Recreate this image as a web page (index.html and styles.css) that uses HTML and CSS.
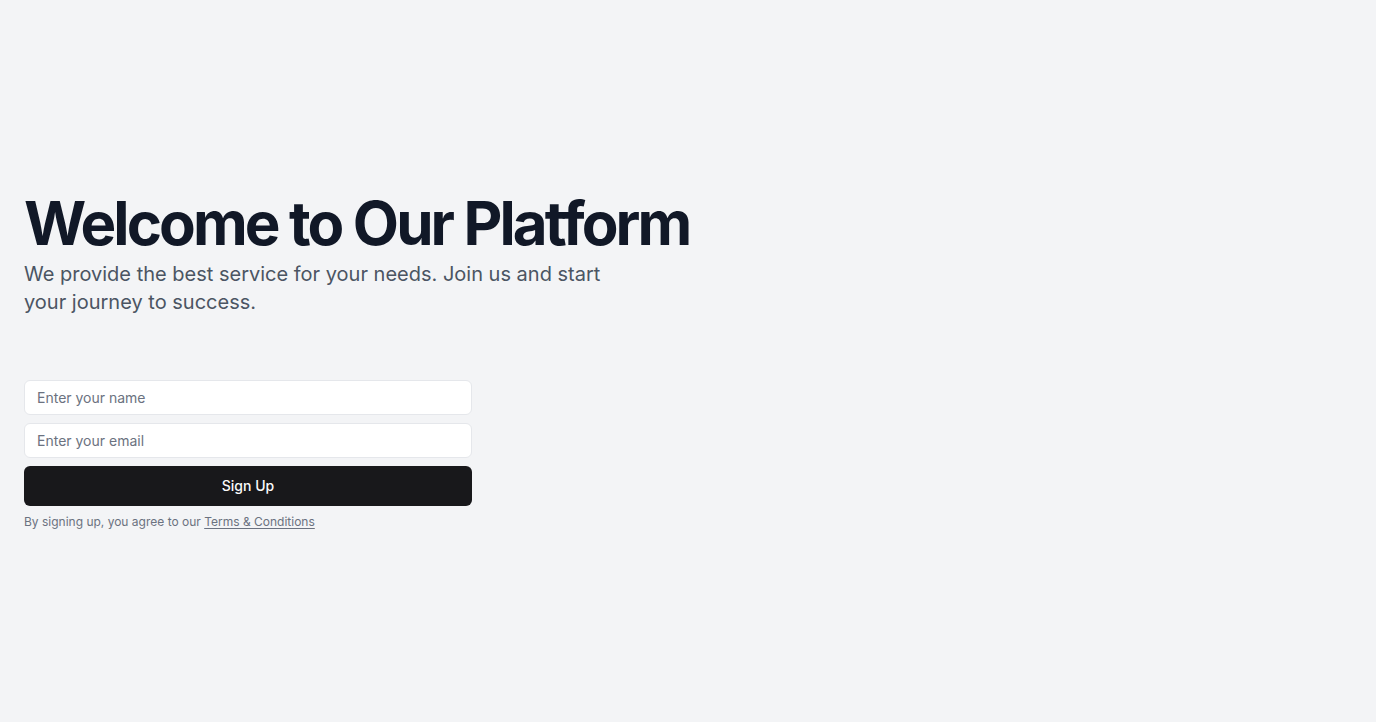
FILE: index.html
```html
<!DOCTYPE html>
<html lang="en">
<head>
<meta charset="utf-8">
<title>Welcome</title>
<link rel="stylesheet" href="styles.css">
</head>
<body>
<section class="hero">
  <div class="content">
    <div class="intro">
      <h1 class="title">Welcome to Our Platform</h1>
      <p class="lead">We provide the best service for your needs. Join us and start your journey to success.</p>
    </div>
    <form class="signup">
      <input class="field" type="text" placeholder="Enter your name">
      <input class="field" type="email" placeholder="Enter your email">
      <button class="submit" type="button">Sign Up</button>
      <p class="note">By signing up, you agree to our <a class="terms" href="#">Terms &amp; Conditions</a></p>
    </form>
  </div>
</section>
</body>
</html>
```

FILE: styles.css
```css
* { box-sizing: border-box; }
html, body { margin: 0; padding: 0; }
body {
  background: #f3f4f6;
  font-family: Inter, "Liberation Sans", sans-serif;
  color: #111827;
}
.hero {
  min-height: 722px;
  display: flex;
  align-items: center;
  padding: 0 24px;
}
.content {
  display: flex;
  flex-direction: column;
  gap: 64px;
}
.intro {
  display: flex;
  flex-direction: column;
  gap: 7px;
}
.title {
  margin: 0;
  font-size: 60px;
  line-height: 60px;
  font-weight: 700;
  letter-spacing: -0.048em;
  color: #111827;
}
.lead {
  margin: 0;
  max-width: 600px;
  font-size: 20px;
  line-height: 28px;
  color: #4b5563;
}
.signup {
  width: 448px;
  display: flex;
  flex-direction: column;
  gap: 8px;
  margin: 0;
}
.field {
  height: 35px;
  width: 100%;
  border: 1px solid #e5e7eb;
  border-radius: 6px;
  background: #ffffff;
  padding: 0 12px;
  font-family: inherit;
  font-size: 14px;
  color: #111827;
  outline: none;
}
.field::placeholder { color: #6b7280; }
.submit {
  height: 40px;
  width: 100%;
  border: 0;
  border-radius: 6px;
  background: #18181b;
  color: #fafafa;
  font-family: inherit;
  font-size: 14px;
  font-weight: 500;
}
.note {
  margin: 0;
  font-size: 12px;
  line-height: 16px;
  color: #6b7280;
}
.terms {
  color: #6b7280;
  text-decoration: underline;
  text-underline-offset: 2px;
}
```
